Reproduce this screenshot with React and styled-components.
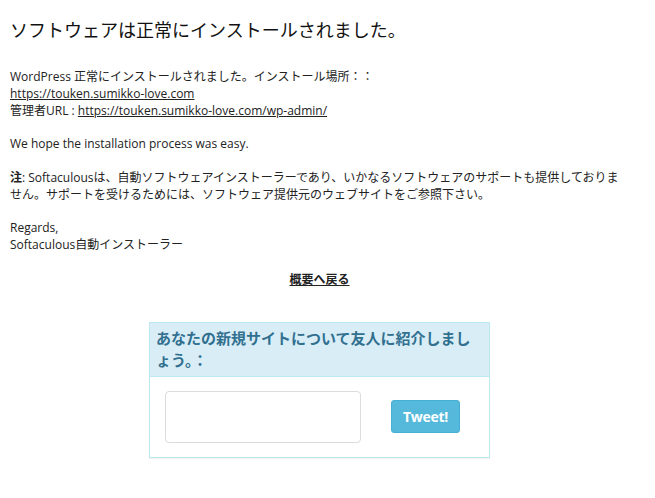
import React from "react"
import styled, { createGlobalStyle } from "styled-components"

const GlobalStyle = createGlobalStyle`
  body {
    margin: 0;
    background: #ffffff;
    font-family: "Open Sans", "Noto Sans CJK JP", sans-serif;
    color: #222222;
  }
`

const Page = styled.div`
  width: 619px;
  padding: 18px 0 30px 10px;
  font-size: 12px;
  line-height: 16.8px;
`

const Title = styled.h1`
  margin: 0 0 27px;
  font-size: 18px;
  font-weight: 400;
  line-height: 24px;
  color: #111111;
`

const Block = styled.p`
  margin: 0 0 16.8px;
`

const TextLink = styled.a`
  color: #222222;
  text-decoration: underline;
`

const Back = styled.div`
  text-align: center;
  font-weight: 700;
  margin-top: 18px;
  a {
    color: #222222;
    text-decoration: underline;
  }
`

const Panel = styled.div`
  width: 339px;
  margin: 33px auto 0;
  border: 1px solid #bce8f1;
  box-shadow: 0 1px 1px rgba(0, 0, 0, 0.05);
`

const PanelHeading = styled.h3`
  margin: 0;
  padding: 4px 6px 4px;
  background: #d9edf7;
  border-bottom: 1px solid #bce8f1;
  color: #31708f;
  font-size: 15px;
  font-weight: 700;
  line-height: 22.5px;
`

const PanelBody = styled.div`
  display: flex;
  align-items: center;
  gap: 30px;
  padding: 14px 15px;
`

const Message = styled.textarea`
  width: 196px;
  height: 52px;
  box-sizing: border-box;
  border: 1px solid #dcdcdc;
  border-radius: 4px;
  resize: none;
  font-family: inherit;
`

const TweetButton = styled.button`
  width: 69px;
  height: 33px;
  background: #55b9db;
  border: 1px solid #46b0d4;
  border-radius: 3px;
  color: #ffffff;
  font-family: "Open Sans", sans-serif;
  font-size: 14px;
  font-weight: 700;
  letter-spacing: -0.3px;
  padding: 0;
`

export default function App() {
  return (
    <Page>
      <GlobalStyle />
      <Title>ソフトウェアは正常にインストールされました。</Title>
      <Block>
        WordPress 正常にインストールされました。インストール場所：：
        <br />
        <TextLink href="#">https://touken.sumikko-love.com</TextLink>
        <br />
        管理者URL : <TextLink href="#">https://touken.sumikko-love.com/wp-admin/</TextLink>
      </Block>
      <Block>We hope the installation process was easy.</Block>
      <Block>
        <b>注</b>: Softaculousは、自動ソフトウェアインストーラーであり、いかなるソフトウェアのサポートも提供しておりません。サポートを受けるためには、ソフトウェア提供元のウェブサイトをご参照下さい。
      </Block>
      <Block>
        Regards,
        <br />
        Softaculous自動インストーラー
      </Block>
      <Back>
        <a href="#">概要へ戻る</a>
      </Back>
      <Panel>
        <PanelHeading>あなたの新規サイトについて友人に紹介しましょう。：</PanelHeading>
        <PanelBody>
          <Message />
          <TweetButton>Tweet!</TweetButton>
        </PanelBody>
      </Panel>
    </Page>
  )
}
